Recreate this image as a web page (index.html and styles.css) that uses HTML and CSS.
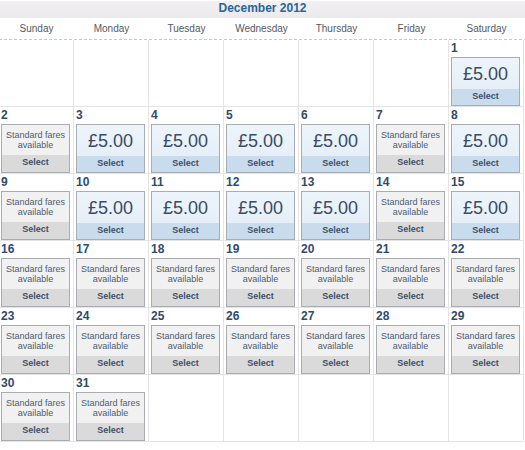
FILE: index.html
```html
<!DOCTYPE html>
<html>
<head>
<meta charset="utf-8">
<link rel="stylesheet" href="styles.css">
</head>
<body>
<div class="cal">
  <div class="title">December 2012</div>
  <div class="days">
    <div>Sunday</div><div>Monday</div><div>Tuesday</div><div>Wednesday</div><div>Thursday</div><div>Friday</div><div>Saturday</div>
  </div>
  <div class="grid">
    <div class="cell"></div><div class="cell"></div><div class="cell"></div><div class="cell"></div><div class="cell"></div><div class="cell"></div>
    <div class="cell"><div class="num">1</div><div class="box price"><div class="top">£5.00</div><div class="sel">Select</div></div></div>

    <div class="cell"><div class="num">2</div><div class="box std"><div class="top">Standard fares<br>available</div><div class="sel">Select</div></div></div>
    <div class="cell"><div class="num">3</div><div class="box price"><div class="top">£5.00</div><div class="sel">Select</div></div></div>
    <div class="cell"><div class="num">4</div><div class="box price"><div class="top">£5.00</div><div class="sel">Select</div></div></div>
    <div class="cell"><div class="num">5</div><div class="box price"><div class="top">£5.00</div><div class="sel">Select</div></div></div>
    <div class="cell"><div class="num">6</div><div class="box price"><div class="top">£5.00</div><div class="sel">Select</div></div></div>
    <div class="cell"><div class="num">7</div><div class="box std"><div class="top">Standard fares<br>available</div><div class="sel">Select</div></div></div>
    <div class="cell"><div class="num">8</div><div class="box price"><div class="top">£5.00</div><div class="sel">Select</div></div></div>

    <div class="cell"><div class="num">9</div><div class="box std"><div class="top">Standard fares<br>available</div><div class="sel">Select</div></div></div>
    <div class="cell"><div class="num">10</div><div class="box price"><div class="top">£5.00</div><div class="sel">Select</div></div></div>
    <div class="cell"><div class="num">11</div><div class="box price"><div class="top">£5.00</div><div class="sel">Select</div></div></div>
    <div class="cell"><div class="num">12</div><div class="box price"><div class="top">£5.00</div><div class="sel">Select</div></div></div>
    <div class="cell"><div class="num">13</div><div class="box price"><div class="top">£5.00</div><div class="sel">Select</div></div></div>
    <div class="cell"><div class="num">14</div><div class="box std"><div class="top">Standard fares<br>available</div><div class="sel">Select</div></div></div>
    <div class="cell"><div class="num">15</div><div class="box price"><div class="top">£5.00</div><div class="sel">Select</div></div></div>

    <div class="cell"><div class="num">16</div><div class="box std"><div class="top">Standard fares<br>available</div><div class="sel">Select</div></div></div>
    <div class="cell"><div class="num">17</div><div class="box std"><div class="top">Standard fares<br>available</div><div class="sel">Select</div></div></div>
    <div class="cell"><div class="num">18</div><div class="box std"><div class="top">Standard fares<br>available</div><div class="sel">Select</div></div></div>
    <div class="cell"><div class="num">19</div><div class="box std"><div class="top">Standard fares<br>available</div><div class="sel">Select</div></div></div>
    <div class="cell"><div class="num">20</div><div class="box std"><div class="top">Standard fares<br>available</div><div class="sel">Select</div></div></div>
    <div class="cell"><div class="num">21</div><div class="box std"><div class="top">Standard fares<br>available</div><div class="sel">Select</div></div></div>
    <div class="cell"><div class="num">22</div><div class="box std"><div class="top">Standard fares<br>available</div><div class="sel">Select</div></div></div>

    <div class="cell"><div class="num">23</div><div class="box std"><div class="top">Standard fares<br>available</div><div class="sel">Select</div></div></div>
    <div class="cell"><div class="num">24</div><div class="box std"><div class="top">Standard fares<br>available</div><div class="sel">Select</div></div></div>
    <div class="cell"><div class="num">25</div><div class="box std"><div class="top">Standard fares<br>available</div><div class="sel">Select</div></div></div>
    <div class="cell"><div class="num">26</div><div class="box std"><div class="top">Standard fares<br>available</div><div class="sel">Select</div></div></div>
    <div class="cell"><div class="num">27</div><div class="box std"><div class="top">Standard fares<br>available</div><div class="sel">Select</div></div></div>
    <div class="cell"><div class="num">28</div><div class="box std"><div class="top">Standard fares<br>available</div><div class="sel">Select</div></div></div>
    <div class="cell"><div class="num">29</div><div class="box std"><div class="top">Standard fares<br>available</div><div class="sel">Select</div></div></div>

    <div class="cell"><div class="num">30</div><div class="box std"><div class="top">Standard fares<br>available</div><div class="sel">Select</div></div></div>
    <div class="cell"><div class="num">31</div><div class="box std"><div class="top">Standard fares<br>available</div><div class="sel">Select</div></div></div>
    <div class="cell"></div><div class="cell"></div><div class="cell"></div><div class="cell"></div><div class="cell"></div>
  </div>
</div>
</body>
</html>
```

FILE: styles.css
```css
html, body {
  margin: 0;
  padding: 0;
  background: #ffffff;
}
body {
  font-family: "Liberation Sans", Arial, Helvetica, sans-serif;
  width: 525px;
  overflow: hidden;
}
.cal {
  width: 525px;
  padding-top: 1px;
}
.title {
  height: 17px;
  box-sizing: border-box;
  line-height: 14px;
  background: linear-gradient(#f2f0f2, #ebe9eb);
  text-align: center;
  font-size: 12px;
  font-weight: bold;
  color: #2a6599;
}
.days {
  display: grid;
  grid-template-columns: repeat(7, 75px);
  margin-left: -1px;
  height: 21px;
  line-height: 21px;
  font-size: 10px;
  color: #555a60;
  text-align: center;
  background-image: repeating-linear-gradient(to right, #c9c9c9 0 3px, transparent 3px 5px);
  background-size: 100% 1px;
  background-repeat: no-repeat;
  background-position: bottom left;
  padding-bottom: 1px;
}
.grid {
  display: grid;
  grid-template-columns: repeat(7, 75px);
  grid-auto-rows: 67px;
  margin-left: -1px;
}
.cell {
  box-sizing: border-box;
  border-right: 1px solid #e4e4e4;
  border-bottom: 1px solid #e4e4e4;
  padding: 1px 3px 0 2px;
}
.num {
  font-size: 12px;
  font-weight: bold;
  line-height: 15px;
  height: 15px;
  color: #2f4c6c;
}
.box {
  margin-top: 1px;
  height: 49px;
  box-sizing: border-box;
  border: 1px solid #a9acb0;
  display: flex;
  flex-direction: column;
  text-align: center;
}
.top {
  display: flex;
  align-items: center;
  justify-content: center;
}
.sel {
  flex: 1;
  font-size: 9px;
  font-weight: bold;
  color: #3e5069;
}
.price .top {
  height: 31px;
  background: linear-gradient(#edf4fb, #e6eff8);
  font-size: 18px;
  color: #3a4b63;
  padding-top: 1px;
  box-sizing: border-box;
}
.price .sel {
  background: #c9dcee;
  line-height: 14px;
}
.std .top {
  height: 30px;
  background: #f1f1f1;
  font-size: 9px;
  line-height: 10px;
  color: #4d5d72;
  white-space: nowrap;
}
.std .sel {
  background: #dadada;
  line-height: 15px;
}
```
